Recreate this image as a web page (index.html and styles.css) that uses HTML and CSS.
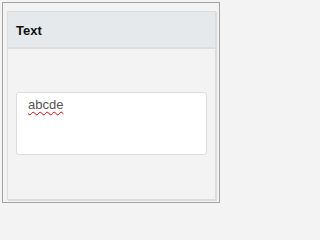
FILE: index.html
```html
<!DOCTYPE html>
<html>
<head>
<meta charset="utf-8">
<link rel="stylesheet" href="styles.css">
</head>
<body>
<div class="frame">
  <div class="panel">
    <div class="panel-header">Text</div>
    <div class="panel-body">
      <div class="textbox"><span class="typo">abcde</span></div>
    </div>
  </div>
</div>
</body>
</html>
```

FILE: styles.css
```css
html, body {
  margin: 0;
  padding: 0;
  background: #f3f3f3;
  font-family: "Liberation Sans", Arial, sans-serif;
}
body {
  padding: 2px 0 0 2px;
  width: 225px;
  height: 207px;
  box-sizing: border-box;
}
.frame {
  width: 218px;
  height: 201px;
  box-sizing: border-box;
  border: 1px solid #a3a3a3;
  background: #f3f3f3;
  padding: 8px 3px 2px 4px;
}
.panel {
  height: 100%;
  box-sizing: border-box;
  border: 1px solid #dcdcdc;
  box-shadow: 1px 1px 0 #dcdcdc;
  background: #f3f3f3;
  display: flex;
  flex-direction: column;
}
.panel-header {
  height: 35px;
  background: #e6e9ec;
  border-bottom: 2px solid #dddddd;
  font-weight: bold;
  font-size: 13px;
  color: #111;
  padding-left: 8px;
  line-height: 37px;
}
.panel-body {
  padding: 43px 8px 0 8px;
}
.textbox {
  height: 63px;
  box-sizing: border-box;
  background: #fff;
  border: 1px solid #dcdcdc;
  border-radius: 3px;
  padding: 4px 11px;
  font-size: 13px;
  line-height: 15px;
  color: #555;
}
.typo {
  text-decoration: underline wavy #e00;
  text-decoration-thickness: 1px;
  text-underline-offset: 2px;
}
```
